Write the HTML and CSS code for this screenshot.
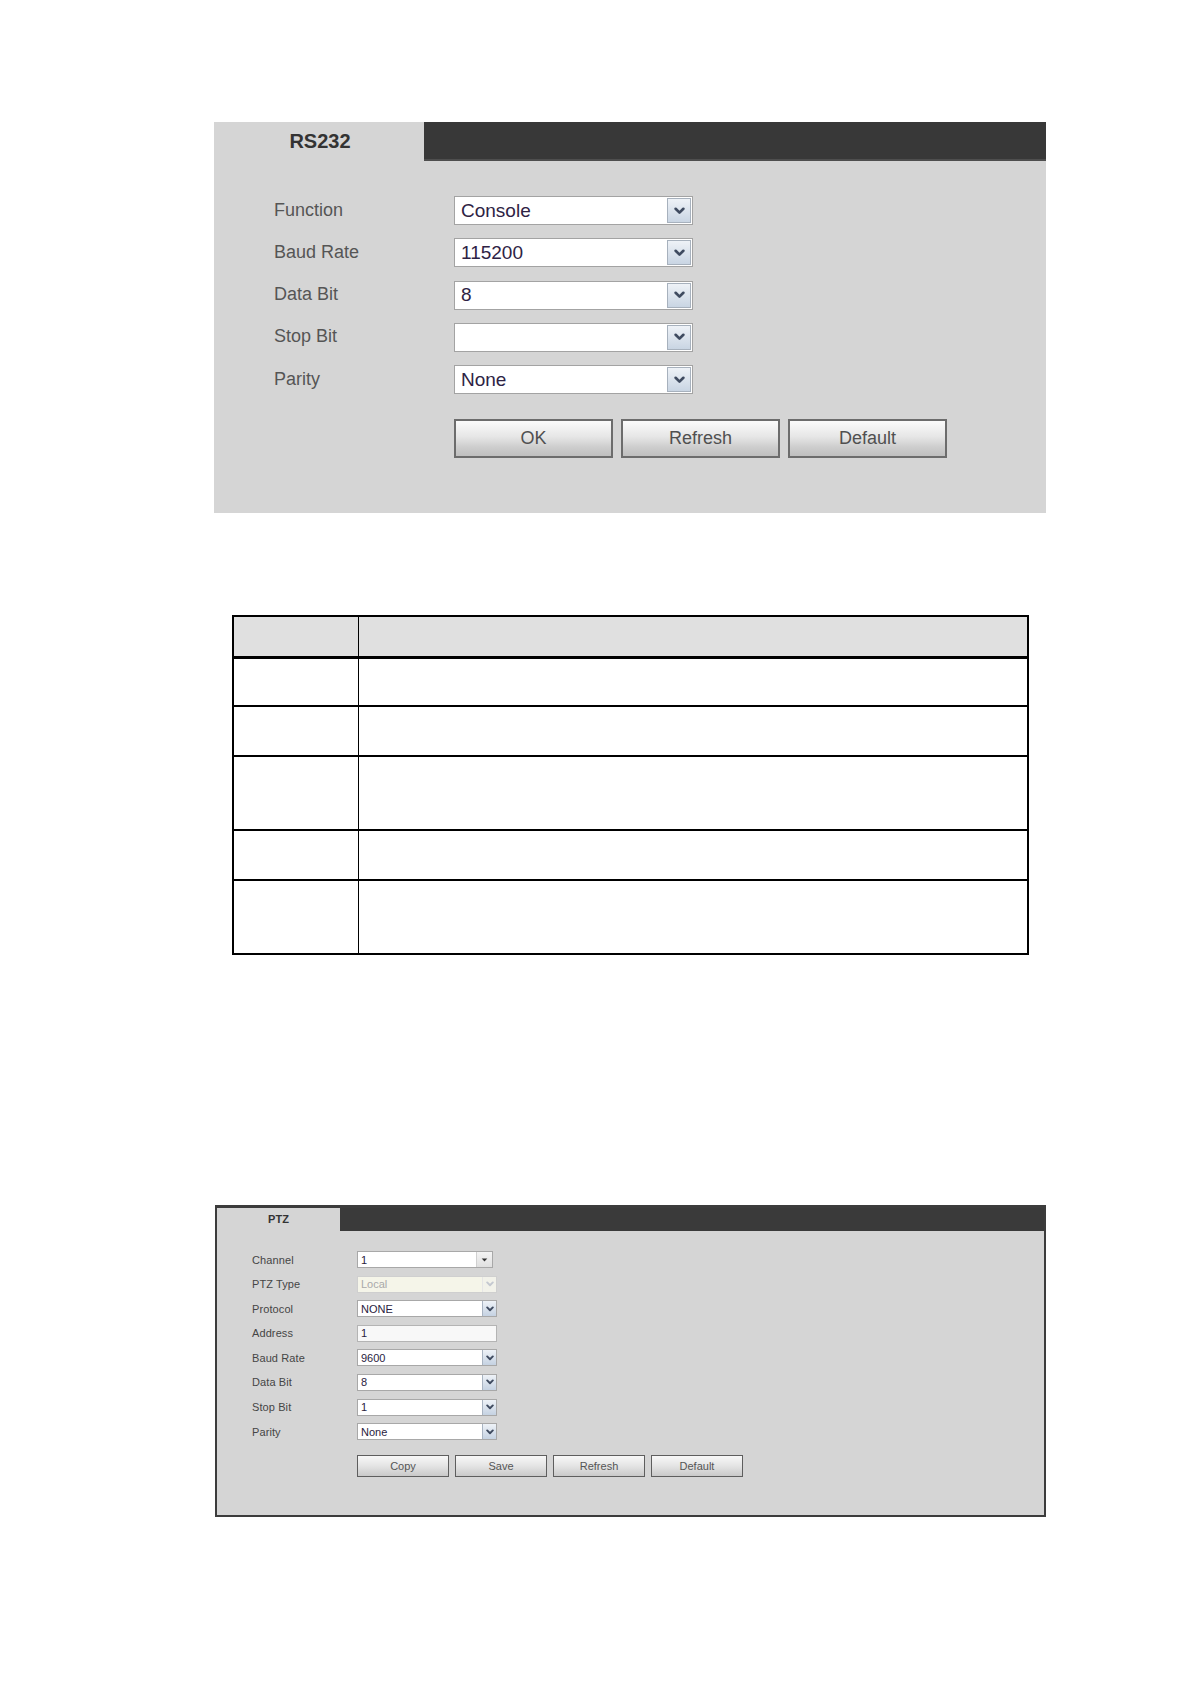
FILE: index.html
```html
<!DOCTYPE html>
<html>
<head>
<meta charset="utf-8">
<link rel="stylesheet" href="styles.css">
</head>
<body>
<div class="page">
  <section class="rs-panel">
    <div class="rs-head">
      <div class="rs-tab">RS232</div>
      <div class="rs-bar"></div>
    </div>
    <div class="rs-form">
      <div class="rs-label">Function</div>
      <div class="rs-select"><span class="rs-val">Console</span><span class="rs-arrow"><svg viewBox="0 0 10 7"><path d="M1.5 1.5l3.5 3.5 3.5-3.5"/></svg></span></div>
      <div class="rs-label">Baud Rate</div>
      <div class="rs-select"><span class="rs-val">115200</span><span class="rs-arrow"><svg viewBox="0 0 10 7"><path d="M1.5 1.5l3.5 3.5 3.5-3.5"/></svg></span></div>
      <div class="rs-label">Data Bit</div>
      <div class="rs-select"><span class="rs-val">8</span><span class="rs-arrow"><svg viewBox="0 0 10 7"><path d="M1.5 1.5l3.5 3.5 3.5-3.5"/></svg></span></div>
      <div class="rs-label">Stop Bit</div>
      <div class="rs-select"><span class="rs-val"></span><span class="rs-arrow"><svg viewBox="0 0 10 7"><path d="M1.5 1.5l3.5 3.5 3.5-3.5"/></svg></span></div>
      <div class="rs-label">Parity</div>
      <div class="rs-select"><span class="rs-val">None</span><span class="rs-arrow"><svg viewBox="0 0 10 7"><path d="M1.5 1.5l3.5 3.5 3.5-3.5"/></svg></span></div>
    </div>
    <div class="rs-buttons">
      <div class="rs-btn">OK</div>
      <div class="rs-btn">Refresh</div>
      <div class="rs-btn">Default</div>
    </div>
  </section>

  <table class="param-table">
    <tr class="hdr"><td class="c1"></td><td class="c2"></td></tr>
    <tr class="r1"><td class="c1"></td><td class="c2"></td></tr>
    <tr class="r2"><td class="c1"></td><td class="c2"></td></tr>
    <tr class="r3"><td class="c1"></td><td class="c2"></td></tr>
    <tr class="r4"><td class="c1"></td><td class="c2"></td></tr>
    <tr class="r5"><td class="c1"></td><td class="c2"></td></tr>
  </table>

  <section class="ptz-panel">
    <div class="ptz-head">
      <div class="ptz-tab">PTZ</div>
      <div class="ptz-bar"></div>
    </div>
    <div class="ptz-form">
      <div class="ptz-label">Channel</div>
      <div class="ptz-select narrow"><span class="ptz-val">1</span><span class="ptz-tri"><svg viewBox="0 0 8 5"><path d="M0.5 0.5h7l-3.5 4z"/></svg></span></div>
      <div class="ptz-label">PTZ Type</div>
      <div class="ptz-select disabled"><span class="ptz-val">Local</span><span class="ptz-arrow"><svg viewBox="0 0 10 7"><path d="M1.5 1.5l3.5 3.5 3.5-3.5"/></svg></span></div>
      <div class="ptz-label">Protocol</div>
      <div class="ptz-select"><span class="ptz-val">NONE</span><span class="ptz-arrow"><svg viewBox="0 0 10 7"><path d="M1.5 1.5l3.5 3.5 3.5-3.5"/></svg></span></div>
      <div class="ptz-label">Address</div>
      <div class="ptz-input">1</div>
      <div class="ptz-label">Baud Rate</div>
      <div class="ptz-select"><span class="ptz-val">9600</span><span class="ptz-arrow"><svg viewBox="0 0 10 7"><path d="M1.5 1.5l3.5 3.5 3.5-3.5"/></svg></span></div>
      <div class="ptz-label">Data Bit</div>
      <div class="ptz-select"><span class="ptz-val">8</span><span class="ptz-arrow"><svg viewBox="0 0 10 7"><path d="M1.5 1.5l3.5 3.5 3.5-3.5"/></svg></span></div>
      <div class="ptz-label">Stop Bit</div>
      <div class="ptz-select"><span class="ptz-val">1</span><span class="ptz-arrow"><svg viewBox="0 0 10 7"><path d="M1.5 1.5l3.5 3.5 3.5-3.5"/></svg></span></div>
      <div class="ptz-label">Parity</div>
      <div class="ptz-select"><span class="ptz-val">None</span><span class="ptz-arrow"><svg viewBox="0 0 10 7"><path d="M1.5 1.5l3.5 3.5 3.5-3.5"/></svg></span></div>
    </div>
    <div class="ptz-buttons">
      <div class="ptz-btn">Copy</div>
      <div class="ptz-btn">Save</div>
      <div class="ptz-btn">Refresh</div>
      <div class="ptz-btn">Default</div>
    </div>
  </section>
</div>
</body>
</html>
```

FILE: styles.css
```css
* { box-sizing: border-box; }
html, body { margin: 0; padding: 0; background: #ffffff; }
body { font-family: "Liberation Sans", Arial, sans-serif; }

.page {
  padding: 122px 0 0 214px;
  display: flex;
  flex-direction: column;
  align-items: flex-start;
}

/* ---------- RS232 panel ---------- */
.rs-panel {
  width: 832px;
  height: 391px;
  background: #d5d5d5;
}
.rs-head { display: flex; height: 39px; }
.rs-tab {
  width: 210px;
  display: flex;
  align-items: center;
  justify-content: center;
  font-weight: bold;
  font-size: 20px;
  color: #333333;
  padding-left: 2px;
}
.rs-bar {
  flex: 1;
  background: #383838;
  border-bottom: 2px solid #4e4e4e;
}
.rs-form {
  display: grid;
  grid-template-columns: 180px 239px;
  grid-auto-rows: 29px;
  row-gap: 13.3px;
  padding: 35px 0 0 60px;
}
.rs-label {
  display: flex;
  align-items: center;
  font-size: 18px;
  color: #555555;
  padding-bottom: 1px;
}
.rs-select {
  display: flex;
  border: 1px solid #a3a3a3;
  background: #ffffff;
}
.rs-val {
  flex: 1;
  display: flex;
  align-items: center;
  padding-left: 6px;
  font-size: 19px;
  color: #2e2244;
}
.rs-arrow {
  width: 24px;
  margin: 1px;
  border: 1px solid #a7b1bd;
  background: linear-gradient(#eef2f7, #c9d5e3);
  display: flex;
  align-items: center;
  justify-content: center;
}
.rs-arrow svg { width: 11px; height: 8px; }
.rs-arrow path, .ptz-arrow path {
  fill: none;
  stroke: #3f4b60;
  stroke-width: 2.4;
  stroke-linecap: round;
  stroke-linejoin: round;
}
.rs-buttons {
  display: flex;
  gap: 8px;
  margin: 25px 0 0 240px;
}
.rs-btn {
  width: 159px;
  height: 39px;
  border: 2px solid #6c6c6c;
  background: linear-gradient(#fbfbfb 0%, #e6e6e6 45%, #cdcdcd 75%, #bfbfbf 100%);
  display: flex;
  align-items: center;
  justify-content: center;
  font-size: 18px;
  color: #505050;
}

/* ---------- table ---------- */
.param-table {
  margin: 102px 0 0 18px;
  width: 797px;
  border-collapse: collapse;
  border: 2px solid #000000;
}
.param-table td {
  padding: 0;
  border-top: 2px solid #000000;
}
.param-table td.c1 { width: 125px; border-right: 1px solid #000000; }
.param-table tr.hdr td { background: #e0e0e0; height: 41px; border-top: 0; }
.param-table tr.r1 td { height: 49px; border-top-width: 3px; }
.param-table tr.r2 td { height: 50px; }
.param-table tr.r3 td { height: 74px; }
.param-table tr.r4 td { height: 50px; }
.param-table tr.r5 td { height: 74px; }

/* ---------- PTZ panel ---------- */
.ptz-panel {
  margin: 250px 0 0 1px;
  width: 831px;
  height: 312px;
  background: #d5d5d5;
  border: 2px solid #3c3c3c;
  border-top-width: 3px;
}
.ptz-head { display: flex; height: 23px; }
.ptz-tab {
  width: 123px;
  display: flex;
  align-items: center;
  justify-content: center;
  font-weight: bold;
  font-size: 11px;
  color: #333333;
  padding-bottom: 2px;
}
.ptz-bar { flex: 1; background: #3a3a3a; }
.ptz-form {
  display: grid;
  grid-template-columns: 105px 140px;
  grid-auto-rows: 17px;
  row-gap: 7.6px;
  padding: 20px 0 0 35px;
}
.ptz-label {
  display: flex;
  align-items: center;
  font-size: 11px;
  color: #454545;
  letter-spacing: 0.1px;
}
.ptz-select {
  display: flex;
  border: 1px solid #a8a8a8;
  background: #ffffff;
}
.ptz-select.narrow { width: 136px; }
.ptz-val {
  flex: 1;
  display: flex;
  align-items: center;
  padding-left: 3px;
  font-size: 11px;
  color: #2a1c40;
}
.ptz-arrow {
  width: 14px;
  border-left: 1px solid #a9b4c2;
  background: linear-gradient(#eef2f7, #c5d2e2);
  display: flex;
  align-items: center;
  justify-content: center;
}
.ptz-arrow svg { width: 8px; height: 6px; }
.ptz-tri {
  width: 16px;
  background: linear-gradient(#f4f4f4, #e0e0e0);
  border-left: 1px solid #d0d0d0;
  display: flex;
  align-items: center;
  justify-content: center;
}
.ptz-tri svg { width: 7px; height: 4px; }
.ptz-tri path { fill: #333333; }
.ptz-select.disabled {
  background: #f5f5e9;
  border-color: #cfcfcf;
}
.ptz-select.disabled .ptz-val { color: #a9a9a9; }
.ptz-select.disabled .ptz-arrow {
  background: #f2f2ea;
  border-left-color: #e6e6e6;
}
.ptz-select.disabled .ptz-arrow path { stroke: #c4c8d0; }
.ptz-input {
  display: flex;
  align-items: center;
  padding-left: 3px;
  border: 1px solid #b4b4b4;
  background: #f8f8f8;
  font-size: 11px;
  color: #2a1c40;
}
.ptz-buttons {
  display: flex;
  gap: 6px;
  margin: 15px 0 0 140px;
}
.ptz-btn {
  width: 92px;
  height: 22px;
  border: 1px solid #5e5e5e;
  background: linear-gradient(#f8f8f8 0%, #e4e4e4 50%, #c9c9c9 100%);
  display: flex;
  align-items: center;
  justify-content: center;
  font-size: 11px;
  color: #555555;
}
```
